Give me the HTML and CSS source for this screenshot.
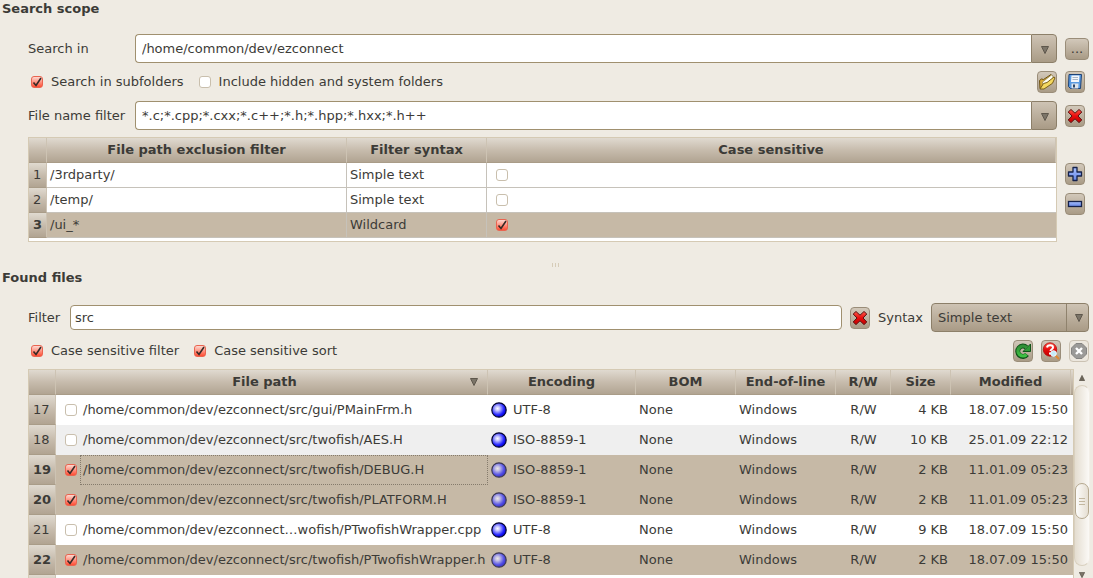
FILE: index.html
```html
<!DOCTYPE html>
<html lang="en">
  <head>
    <meta charset="UTF-8" />
    <title>Search files</title>
    <link rel="stylesheet" href="styles.css">
  </head>
  <body>
    <!-- shared icons -->
    <svg class="defs" aria-hidden="true">
      <defs>
        <radialGradient id="ball-fill" cx="0.4" cy="0.4" r="0.6">
          <stop offset="0" stop-color="#ffffff" />
          <stop offset="0.25" stop-color="#c4c4ff" />
          <stop offset="0.75" stop-color="#2222ff" />
          <stop offset="1" stop-color="#0000d8" />
        </radialGradient>
        <linearGradient id="blue-fill" x1="0" y1="0" x2="0" y2="1">
          <stop offset="0" stop-color="#a9c1ff" />
          <stop offset="1" stop-color="#6485e6" />
        </linearGradient>
        <linearGradient id="red-fill" x1="0" y1="0" x2="0" y2="1">
          <stop offset="0" stop-color="#ff5a4a" />
          <stop offset="0.5" stop-color="#e80c0c" />
          <stop offset="1" stop-color="#c00000" />
        </linearGradient>
        <linearGradient id="green-fill" x1="0" y1="0" x2="0" y2="1">
          <stop offset="0" stop-color="#2f8f35" />
          <stop offset="1" stop-color="#3fc043" />
        </linearGradient>
        <symbol id="arrow" viewBox="0 0 8 8">
          <path d="M0.5 0.5h7L4 7.5z" fill="#7b7468" stroke="#5e574c" />
        </symbol>
        <symbol id="cross" viewBox="0 0 16 16">
          <path d="M4 1.5 8 5.2 12 1.5 14.8 4 11 8l3.8 4-2.8 2.6L8 10.8l-4 3.8L1.2 12 5 8 1.2 4z" fill="url(#red-fill)" stroke="#5a1010" stroke-linejoin="round" />
        </symbol>
        <symbol id="ball" viewBox="0 0 16 16">
          <circle cx="8" cy="8" r="7.2" fill="url(#ball-fill)" stroke="#05052e" stroke-width="1.2" />
        </symbol>
      </defs>
    </svg>

    <section class="scope">
      <h2>Search scope</h2>
      <div class="scope-grid">
        <label for="search-in">Search in</label>
        <div class="combo">
          <input type="text" id="search-in" value="/home/common/dev/ezconnect" />
          <button class="drop" aria-label="Recent folders"><svg width="8" height="8"><use href="#arrow" /></svg></button>
        </div>
        <button class="tool browse" aria-label="Browse">...</button>

        <div class="options wide">
          <label class="check"><input type="checkbox" checked /> Search in subfolders</label>
          <label class="check"><input type="checkbox" /> Include hidden and system folders</label>
          <div class="tools">
            <button class="tool" aria-label="Open filter">
              <svg width="18" height="18" viewBox="0 0 18 18">
                <path d="M2 15.500 1.500 7.500l2-1.500 2 .5L13 1.500l1.500 2L6 14z" fill="#d9a934" stroke="#6d5216" stroke-linejoin="round" />
                <path d="M4.500 9 13.500 2l1.500 1 0 3L5 13z" fill="#fffef2" stroke="#8c7c4a" stroke-width="0.7" />
                <path d="M2 16 5.500 10.500 9 9.500l7-5.500 1 .8-2.500 5.500L6 16z" fill="#f4d860" stroke="#7a5f17" stroke-linejoin="round" />
              </svg>
            </button>
          </div>
        </div>
        <button class="tool" aria-label="Save filter">
          <svg width="18" height="18" viewBox="0 0 18 18">
            <path d="M3 1.500h12.500l-1 14H4.500l-2-2z" fill="#5a9be2" stroke="#1d4276" stroke-linejoin="round" />
            <path d="M5.500 2.500h8l-.5 6.500H5z" fill="#f4f7fb" />
            <path d="M6.500 4.500h5.500M6.500 6.500h5.500" stroke="#a9b6c6" />
            <path d="M5.500 10.500h7l-.3 5H5.500z" fill="#dfe5ec" />
            <path d="M7 11.500h2v3H7z" fill="#2b4566" />
          </svg>
        </button>

        <label for="name-filter">File name filter</label>
        <div class="combo">
          <input type="text" id="name-filter" value="*.c;*.cpp;*.cxx;*.c++;*.h;*.hpp;*.hxx;*.h++" />
          <button class="drop" aria-label="Recent filters"><svg width="8" height="8"><use href="#arrow" /></svg></button>
        </div>
        <button class="tool" aria-label="Clear file name filter"><svg width="16" height="16"><use href="#cross" /></svg></button>

        <div class="frame wide">
          <table class="exclusions">
            <colgroup>
              <col class="c-num" /><col class="c-filter" /><col class="c-syntax" /><col />
            </colgroup>
            <thead>
              <tr><th></th><th>File path exclusion filter</th><th>Filter syntax</th><th>Case sensitive</th></tr>
            </thead>
            <tbody>
              <tr><th>1</th><td>/3rdparty/</td><td>Simple text</td><td class="c-case"><input type="checkbox" aria-label="Case sensitive 1" /></td></tr>
              <tr><th>2</th><td>/temp/</td><td>Simple text</td><td class="c-case"><input type="checkbox" aria-label="Case sensitive 2" /></td></tr>
              <tr class="selected"><th>3</th><td>/ui_*</td><td>Wildcard</td><td class="c-case"><input type="checkbox" aria-label="Case sensitive 3" checked /></td></tr>
            </tbody>
          </table>
        </div>
        <div class="side">
          <button class="tool" aria-label="Add">
            <svg width="16" height="16" viewBox="0 0 16 16">
              <path d="M6 1.500h4V6h4.500v4H10v4.500H6V10H1.500V6H6z" fill="url(#blue-fill)" stroke="#15224c" stroke-width="1.300" stroke-linejoin="round" />
            </svg>
          </button>
          <button class="tool" aria-label="Remove">
            <svg width="16" height="16" viewBox="0 0 16 16">
              <rect x="1.500" y="5.500" width="13" height="5" fill="url(#blue-fill)" stroke="#15224c" stroke-width="1.300" />
            </svg>
          </button>
        </div>
      </div>
    </section>

    <!-- splitter handle -->
    <div class="splitter"><i></i><i></i><i></i></div>

    <section class="found">
      <h2>Found files</h2>
      <div class="filter-row">
        <label for="filter" class="filter-label">Filter</label>
        <input type="text" id="filter" class="text" value="src" />
        <button class="tool" aria-label="Clear filter"><svg width="16" height="16"><use href="#cross" /></svg></button>
        <label for="syntax">Syntax</label>
        <div class="select">
          <select id="syntax">
            <option>Simple text</option>
            <option>Wildcard</option>
          </select>
          <svg width="8" height="8"><use href="#arrow" /></svg>
        </div>
      </div>
      <div class="options">
        <label class="check"><input type="checkbox" checked /> Case sensitive filter</label>
        <label class="check"><input type="checkbox" checked /> Case sensitive sort</label>
        <div class="tools">
          <button class="tool" aria-label="Refresh">
            <svg width="18" height="18" viewBox="0 0 18 18">
              <path d="M13 12.500A5.200 5.200 0 1 1 12.500 5.500" fill="none" stroke="#12541a" stroke-width="5" />
              <path d="M16.500 2v7.500H9z" fill="#2f9a36" stroke="#12541a" stroke-linejoin="round" />
              <path d="M12.500 12.500A5 5 0 1 1 12.800 5.800" fill="none" stroke="url(#green-fill)" stroke-width="3.200" />
            </svg>
          </button>
          <button class="tool" aria-label="Detect encoding">
            <svg width="18" height="18" viewBox="0 0 18 18">
              <circle cx="8" cy="7.500" r="6.700" fill="url(#red-fill)" stroke="#b30d0d" stroke-width="0.800" />
              <path d="M5 5.500c.5-3 6-3 6 0 0 2-2.500 1.500-2.500 3.500M8 10.500v2" fill="none" stroke="#fff" stroke-width="2" />
              <path d="M13.500 13.500 16.500 16.500" stroke="#e08a34" stroke-width="2" stroke-linecap="round" />
              <circle cx="11.500" cy="11.500" r="2.800" fill="#c5ecfb" stroke="#eef8fd" />
            </svg>
          </button>
          <button class="tool" aria-label="Stop" disabled>
            <svg width="18" height="18" viewBox="0 0 18 18">
              <path d="M6 1.500h6L16.500 6v6L12 16.500H6L1.500 12V6z" fill="#9b9a98" stroke="#858482" />
              <path d="M6 6l6 6M12 6l-6 6" stroke="#fff" stroke-width="2.400" />
            </svg>
          </button>
        </div>
      </div>

      <div class="list">
        <div class="frame">
          <table class="files">
            <colgroup>
              <col class="f-num" /><col /><col class="f-enc" /><col class="f-bom" /><col class="f-eol" /><col class="f-rw" /><col class="f-size" /><col class="f-mod" /><col class="f-end" />
            </colgroup>
            <thead>
              <tr>
                <th></th>
                <th><div class="sorted"><span>File path</span><svg width="8" height="8"><use href="#arrow" /></svg></div></th>
                <th>Encoding</th><th>BOM</th><th>End-of-line</th><th>R/W</th><th>Size</th><th>Modified</th><th></th>
              </tr>
            </thead>
            <tbody>
              <tr>
                <th>17</th>
                <td class="path"><label><input type="checkbox" /><span>/home/common/dev/ezconnect/src/gui/PMainFrm.h</span></label></td>
                <td><div class="enc"><svg width="16" height="16"><use href="#ball" /></svg>UTF-8</div></td>
                <td>None</td><td>Windows</td><td class="center">R/W</td><td class="right">4 KB</td><td class="right" colspan="2">18.07.09 15:50</td>
              </tr>
              <tr class="alt">
                <th>18</th>
                <td class="path"><label><input type="checkbox" /><span>/home/common/dev/ezconnect/src/twofish/AES.H</span></label></td>
                <td><div class="enc"><svg width="16" height="16"><use href="#ball" /></svg>ISO-8859-1</div></td>
                <td>None</td><td>Windows</td><td class="center">R/W</td><td class="right">10 KB</td><td class="right" colspan="2">25.01.09 22:12</td>
              </tr>
              <tr class="selected">
                <th>19</th>
                <td class="path current"><label><input type="checkbox" checked /><span>/home/common/dev/ezconnect/src/twofish/DEBUG.H</span></label></td>
                <td><div class="enc"><svg width="16" height="16"><use href="#ball" /></svg>ISO-8859-1</div></td>
                <td>None</td><td>Windows</td><td class="center">R/W</td><td class="right">2 KB</td><td class="right" colspan="2">11.01.09 05:23</td>
              </tr>
              <tr class="selected">
                <th>20</th>
                <td class="path"><label><input type="checkbox" checked /><span>/home/common/dev/ezconnect/src/twofish/PLATFORM.H</span></label></td>
                <td><div class="enc"><svg width="16" height="16"><use href="#ball" /></svg>ISO-8859-1</div></td>
                <td>None</td><td>Windows</td><td class="center">R/W</td><td class="right">2 KB</td><td class="right" colspan="2">11.01.09 05:23</td>
              </tr>
              <tr>
                <th>21</th>
                <td class="path"><label><input type="checkbox" /><span>/home/common/dev/ezconnect…wofish/PTwofishWrapper.cpp</span></label></td>
                <td><div class="enc"><svg width="16" height="16"><use href="#ball" /></svg>UTF-8</div></td>
                <td>None</td><td>Windows</td><td class="center">R/W</td><td class="right">9 KB</td><td class="right" colspan="2">18.07.09 15:50</td>
              </tr>
              <tr class="selected">
                <th>22</th>
                <td class="path"><label><input type="checkbox" checked /><span>/home/common/dev/ezconnect/src/twofish/PTwofishWrapper.h</span></label></td>
                <td><div class="enc"><svg width="16" height="16"><use href="#ball" /></svg>UTF-8</div></td>
                <td>None</td><td>Windows</td><td class="center">R/W</td><td class="right">2 KB</td><td class="right" colspan="2">18.07.09 15:50</td>
              </tr>
              <tr><th></th><td colspan="8"></td></tr>
            </tbody>
          </table>
        </div>
        <div class="scrollbar">
          <svg class="up" width="6" height="6" viewBox="0 0 8 8"><path d="M0.500 7.500h7L4 .5z" fill="#6b6458" stroke="#5e574c" /></svg>
          <div class="track"><div class="thumb"><i></i><i></i><i></i></div></div>
          <svg class="down" width="6" height="6"><use href="#arrow" /></svg>
        </div>
      </div>
    </section>
  </body>
</html>
```

FILE: styles.css
```css
* {
  box-sizing: border-box;
}

body {
  margin: 0;
  height: 100vh;
  display: flex;
  flex-direction: column;
  overflow: hidden;
  background: #efebe3;
  color: #3c3b37;
  font-family: "DejaVu Sans", sans-serif;
  font-size: 13px;
  line-height: 18px;
}

input,
select,
button {
  margin: 0;
  font: inherit;
  color: inherit;
}

svg {
  display: block;
  flex: none;
}

.defs {
  position: absolute;
  width: 0;
  height: 0;
}

h2 {
  margin: 0 0 16px;
  padding-left: 2px;
  font-size: 13px;
  line-height: 18px;
}

/* search scope */
.scope-grid {
  display: grid;
  grid-template-columns: minmax(99px, auto) 1fr 24px;
  column-gap: 8px;
  row-gap: 8px;
  align-items: center;
  padding: 0 4px 0 28px;
}

.wide {
  grid-column: span 2;
}

.combo {
  display: flex;
  height: 29px;
}

.combo input,
.text {
  flex: 1;
  min-width: 0;
  background: #fff;
  border: 1px solid #a0906f;
  outline: none;
}

.combo input {
  padding: 0 6px;
  border-right: none;
  border-radius: 4px 0 0 4px;
}

.drop {
  display: flex;
  align-items: center;
  justify-content: center;
  width: 26px;
  padding: 2px 0 0 2px;
  border: 1px solid #8c7f69;
  border-radius: 0 4px 4px 0;
  background: linear-gradient(#cec3b4, #a99b86);
}

.tool {
  display: flex;
  align-items: center;
  justify-content: center;
  width: 20px;
  height: 22px;
  padding: 0;
  border: 1px solid #9a8d79;
  border-radius: 4px;
  background: linear-gradient(#d2c8ba, #a99b86);
}

.tool:disabled {
  border-color: #cbc2b3;
  background: #ece7de;
}

.browse {
  width: 24px;
}

.options {
  display: flex;
  align-items: center;
  gap: 15px;
}

.check {
  display: flex;
  align-items: center;
  gap: 8px;
  padding-left: 3px;
}

.check + .check {
  padding-left: 0;
}

.tools {
  display: flex;
  gap: 8px;
  margin-left: auto;
}

input[type="checkbox"] {
  appearance: none;
  flex: none;
  width: 12px;
  height: 12px;
  border: 1px solid #c9bfad;
  border-radius: 3px;
  background: #fff;
}

input[type="checkbox"]:checked {
  border-color: #ea6450;
  background: url("data:image/svg+xml,%3Csvg xmlns='http://www.w3.org/2000/svg' viewBox='0 0 10 10'%3E%3Cpath d='M1.500 5.500l2.500 3L9 1' fill='none' stroke='%23352a27' stroke-width='1.600'/%3E%3C/svg%3E") center / 10px 10px no-repeat, linear-gradient(#fdd8d0, #ff4e34);
}

.side {
  align-self: start;
  display: flex;
  flex-direction: column;
  gap: 8px;
  padding-top: 26px;
}

/* tables */
.frame {
  border: 1px solid #d5cab4;
  background: #fff;
}

.scope .frame {
  padding-bottom: 3px;
}

.scope .frame,
.side {
  margin-top: -1px;
}

table {
  width: 100%;
  table-layout: fixed;
  border-collapse: separate;
  border-spacing: 0;
}

th,
td {
  padding: 0 3px;
  text-align: left;
  white-space: nowrap;
  overflow: hidden;
}

th {
  background: linear-gradient(#e0dad0, #c7bcad 50%, #b1a492);
  border-right: 1px solid #cdc3b3;
  border-bottom: 1px solid #a99c88;
}

thead th {
  height: 25px;
  text-align: center;
}

tbody th {
  padding-left: 4px;
  font-weight: normal;
}

.selected th {
  font-weight: bold;
}

.selected td {
  background: #c6b9a6;
}

.alt td {
  background: #efefef;
}

.exclusions tbody th,
.exclusions td {
  height: 25px;
}

.exclusions td {
  border-right: 1px solid #c6c2ba;
  border-bottom: 1px solid #c6c2ba;
}

.exclusions .c-case {
  padding-left: 9px;
  border-right: none;
}

.c-case input {
  display: block;
}

.c-num {
  width: 18px;
}

.c-filter {
  width: 300px;
}

.c-syntax {
  width: 140px;
}

.splitter {
  display: flex;
  justify-content: center;
  align-items: flex-end;
  gap: 2px;
  height: 27px;
  padding: 0 0 2px 18px;
}

.splitter i {
  width: 1px;
  height: 4px;
  background: #d6ccb8;
}

/* found files */
.found {
  flex: 1;
  min-height: 0;
  display: flex;
  flex-direction: column;
}

.filter-row {
  display: flex;
  align-items: center;
  gap: 8px;
  padding: 0 4px 0 28px;
}

.filter-label {
  min-width: 34px;
}

.text {
  height: 25px;
  padding: 0 4px;
  border-radius: 4px;
}

.select {
  position: relative;
  width: 158px;
}

.select select {
  display: block;
  appearance: none;
  width: 100%;
  height: 29px;
  padding: 0 30px 0 6px;
  border: 1px solid #8c7f69;
  border-radius: 4px;
  background: linear-gradient(#8f826d, #8f826d) right 21px top / 1px 100% no-repeat, linear-gradient(#cec3b4, #a99b86);
}

.select svg {
  position: absolute;
  right: 6px;
  top: 11px;
  pointer-events: none;
}

.found .options {
  padding: 8px 4px 7px 28px;
}

.list {
  flex: 1;
  min-height: 0;
  display: flex;
  padding: 0 3px 0 28px;
}

.list .frame {
  flex: 1;
  min-width: 0;
  border-bottom: none;
  overflow: hidden;
}

.files tbody th,
.files td {
  height: 30px;
}

.files .path {
  padding: 0 0 0 9px;
}

.path label {
  display: flex;
  align-items: center;
  gap: 3px;
}

.path span {
  flex: 1;
  padding-left: 2px;
  border: 1px solid transparent;
  line-height: 28px;
}

.current span {
  border: 1px dotted #857b6c;
}

.sorted {
  display: flex;
  align-items: center;
  padding-right: 6px;
}

.sorted span {
  flex: 1;
}

.enc {
  display: flex;
  align-items: center;
  gap: 6px;
}

.selected .enc svg {
  opacity: 0.7;
}

.center {
  text-align: center;
}

.right {
  text-align: right;
}

.files td:last-child {
  padding-right: 5px;
}

.f-num {
  width: 27px;
}

.f-enc {
  width: 148px;
}

.f-bom,
.f-eol {
  width: 100px;
}

.f-rw {
  width: 55px;
}

.f-size {
  width: 60px;
}

.f-mod {
  width: 120px;
}

.f-end {
  width: 2px;
}

.files thead th:last-child {
  padding: 0;
  border-right: none;
}

.scrollbar {
  display: flex;
  flex-direction: column;
  align-items: center;
  width: 16px;
  padding-top: 6px;
}

.track {
  flex: 1;
  width: 16px;
  margin: 4px 0 6px;
  padding-top: 97px;
  border: 1px solid #d9d0bf;
  border-right-color: #f3efe8;
  border-radius: 8px;
  background: linear-gradient(90deg, #e4ddd0, #fbf9f6);
}

.thumb {
  display: flex;
  flex-direction: column;
  align-items: center;
  justify-content: center;
  gap: 2px;
  height: 36px;
  border: 1px solid #b5a88f;
  border-radius: 7px;
  background: linear-gradient(90deg, #fdfcfa, #e6dfd3);
}

.thumb i {
  width: 6px;
  height: 1px;
  background: #c3b79f;
}
```
